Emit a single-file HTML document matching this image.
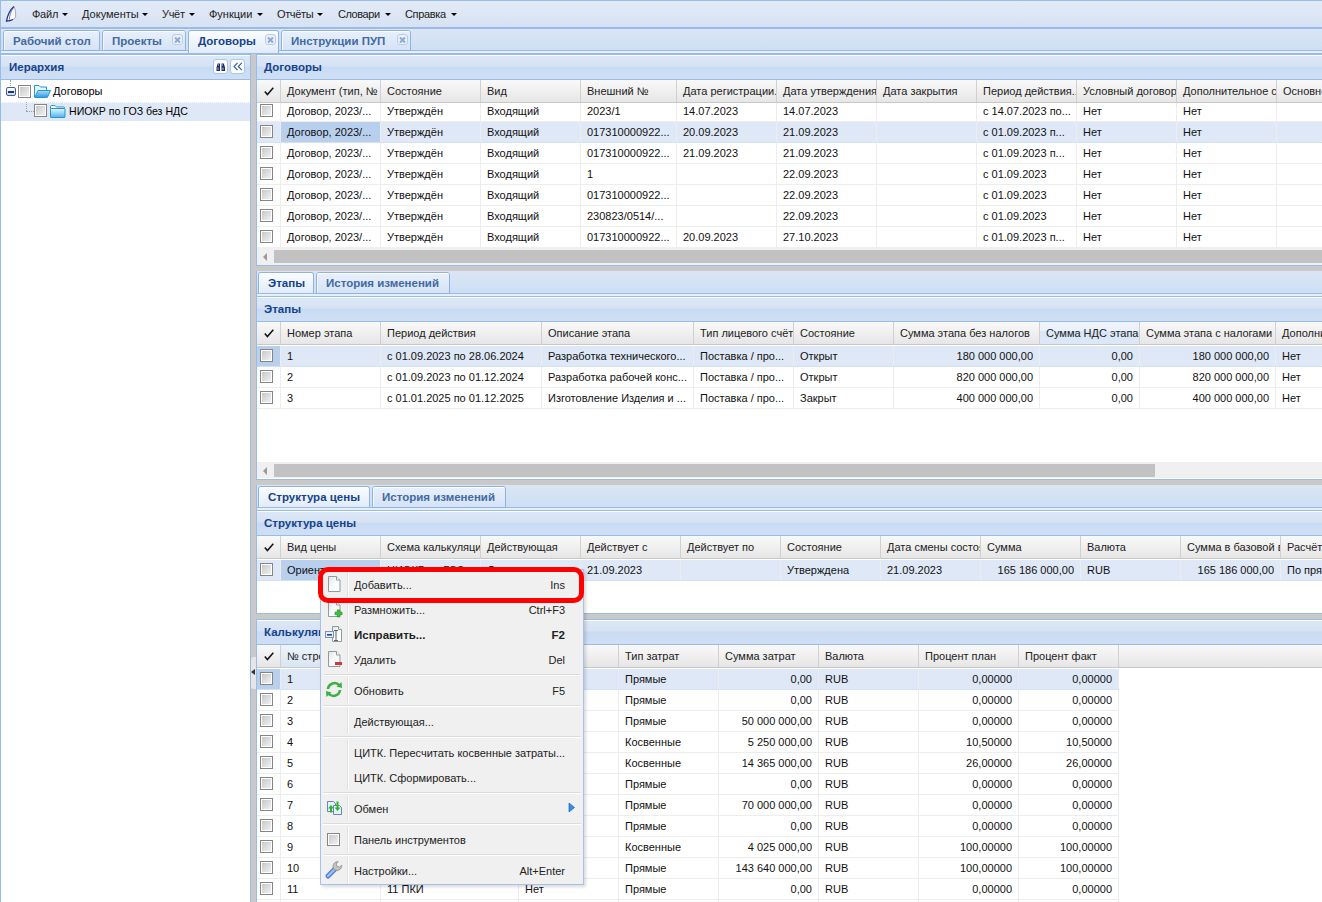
<!DOCTYPE html><html><head><meta charset="utf-8"><style>
*{box-sizing:border-box;margin:0;padding:0}
html,body{width:1322px;height:902px;overflow:hidden;background:#c9c9c9;font-family:"Liberation Sans",sans-serif;font-size:11px;color:#000}
.a{position:absolute}
.menubar{left:0;top:0;width:1322px;height:28px;border:1px solid #99bbe8;border-right:none;background:linear-gradient(#e3ebf7,#d6e2f2)}
.mi{position:absolute;top:8px;font-size:11px;color:#222;white-space:nowrap;line-height:13px}
.arr{position:absolute;top:13px;width:0;height:0;border-left:3px solid transparent;border-right:3px solid transparent;border-top:3px solid #000}
.strip{background:linear-gradient(#dae6f5,#cedef3)}
.tab{position:absolute;border:1px solid #8db2e3;border-bottom:none;border-radius:3px 3px 0 0;background:linear-gradient(#e9f0fa,#d5e3f5);font-weight:bold;font-size:11.5px;color:#416aa3;white-space:nowrap;line-height:14px}
.tab.act{background:linear-gradient(#fbfdff,#e1ebf8);color:#15428b}
.tab .t{position:absolute;top:3px}
.tab .inner{position:absolute;left:0;right:0;top:0;bottom:0;border-top:1px solid #fff;border-left:1px solid #f3f7fc;border-radius:2px 2px 0 0}
.cls{position:absolute;width:11px;height:11px;border:1px solid #b9cdea;border-radius:3px;background:#eaf1fa}
.cls:before,.cls:after{content:"";position:absolute;left:1px;top:3.5px;width:7px;height:2px;background:#8eaad6;transform:rotate(45deg)}
.cls:after{transform:rotate(-45deg)}
.phdr{background:linear-gradient(#fbfdff 0px,#fbfdff 1px,#dce7f6 1px,#d6e3f4 11px,#c9dbf3 12px,#cfdff5 100%);border-bottom:1px solid #99bbe8;font-weight:bold;font-size:11.5px;color:#15428b;white-space:nowrap}
.phdr span{position:absolute;left:7px;line-height:13px}
.ghdr{background:linear-gradient(#f9f9f9,#e6e6e6);border-bottom:1px solid #c8c8c8;white-space:nowrap;overflow:hidden}
.hc{position:absolute;top:0;bottom:0;border-right:1px solid #d0d0d0;overflow:hidden;padding-left:6px;color:#222}
.hc span{position:absolute;left:6px;line-height:13px}
.row{position:absolute;left:0;height:21px;border-bottom:1px solid #ededed;white-space:nowrap;overflow:hidden;background:#fff}
.row.sel{background:#dfe8f6;border-bottom:1px dotted #cbdaf0}
.c{position:absolute;top:0;height:20px;border-right:1px solid #ededed;overflow:hidden;white-space:nowrap;color:#111}
.c span{position:absolute;left:6px;top:4px;line-height:13px}
.c.r span{left:auto;right:6px}
.c.foc{background:#b8cfee}
.cb{position:absolute;width:13px;height:13px;border:1px solid #858585;background:linear-gradient(135deg,#c4c4c4,#f5f5f5);box-shadow:inset 0 0 0 1px #fff}
.sb{background:#f0f0f0}
.thumb{background:#c2c2c2}
.menu{left:320px;top:566px;width:264px;height:319px;border:1px solid #a5c0e6;background:#f0f0f0;box-shadow:1px 1px 3px rgba(0,0,0,.2)}
.mit{position:absolute;left:33px;font-size:11px;color:#222;white-space:nowrap;line-height:13px}
.msc{position:absolute;right:18px;font-size:11px;color:#222;white-space:nowrap;line-height:13px}
.msep{position:absolute;left:6px;right:6px;height:2px;border-top:1px solid #dcdcdc;border-bottom:1px solid #fff}
</style></head><body>
<div class="a menubar"></div>
<svg class="a" style="left:0;top:0" width="28" height="28" viewBox="0 0 28 28"><path d="M14 6.5 C10.5 9.5 7.5 15 6.5 21.2 L13 19.5 L15.6 17.5 C15.8 13 15.5 9 14 6.5 Z" fill="#fcfdff"/><path d="M14 6.5 C15.5 9 15.8 13 15.6 17.5 L13 19.5" fill="none" stroke="#9aa0ad" stroke-width="0.9"/><path d="M14 6.5 C10.5 9.5 7.5 15 6.5 21.2 C9 21 11 20.5 13 19.5" fill="none" stroke="#24348a" stroke-width="1.3"/><path d="M13.2 8.2 C11 11 9.5 15 9.3 19.8" fill="none" stroke="#4d5aa8" stroke-width="0.8"/></svg>
<div class="mi" style="left:32px;letter-spacing:-0.25px">Файл</div><div class="arr" style="left:62px"></div>
<div class="mi" style="left:82px;letter-spacing:0px">Документы</div><div class="arr" style="left:142px"></div>
<div class="mi" style="left:162px;letter-spacing:-0.3px">Учёт</div><div class="arr" style="left:189px"></div>
<div class="mi" style="left:209px;letter-spacing:0px">Функции</div><div class="arr" style="left:257px"></div>
<div class="mi" style="left:277px;letter-spacing:-0.37px">Отчёты</div><div class="arr" style="left:317px"></div>
<div class="mi" style="left:338px;letter-spacing:-0.44px">Словари</div><div class="arr" style="left:385px"></div>
<div class="mi" style="left:405px;letter-spacing:-0.34px">Справка</div><div class="arr" style="left:451px"></div>
<div class="a strip" style="left:0px;top:28px;width:1322px;height:22px;border-left:1px solid #99bbe8;border-top:1px solid #9db8ec;"></div>
<div class="a" style="left:0px;top:50px;width:1322px;height:4px;border-top:1px solid #99bbe8;border-bottom:1px solid #99bbe8;border-left:1px solid #99bbe8;background:#e6effb"></div>
<div class="tab" style="left:3px;top:30px;width:97px;height:21px;border-bottom:1px solid #8db2e3;"><div class="inner"></div><div class="t" style="left:9px;top:3px">Рабочий стол</div></div>
<div class="tab" style="left:102px;top:30px;width:84px;height:21px;border-bottom:1px solid #8db2e3;"><div class="inner"></div><div class="t" style="left:9px;top:3px">Проекты</div><div class="cls" style="left:69px;top:3px"></div></div>
<div class="tab act" style="left:188px;top:30px;width:91px;height:23px;border-bottom:none;"><div class="inner"></div><div class="t" style="left:9px;top:3px">Договоры</div><div class="cls" style="left:76px;top:3px"></div></div>
<div class="tab" style="left:281px;top:30px;width:130px;height:21px;border-bottom:1px solid #8db2e3;"><div class="inner"></div><div class="t" style="left:9px;top:3px">Инструкции ПУП</div><div class="cls" style="left:115px;top:3px"></div></div>
<div class="a" style="left:0;top:54px;width:251px;height:848px;border:1px solid #99bbe8;border-bottom:none;background:#fff"></div>
<div class="a phdr" style="left:1px;top:55px;width:249px;height:25px"><span style="top:6px;left:8px">Иерархия</span></div>
<div class="a" style="left:1px;top:102px;width:249px;height:19px;background:#dfe8f6;border-top:1px dotted #fff"></div>
<div class="a" style="left:10px;top:80px;width:0;height:6px;border-left:1px dotted #a0a0a0"></div>
<div class="a" style="left:26px;top:102px;width:0;height:9px;border-left:1px dotted #a0a0a0"></div>
<div class="a" style="left:26px;top:111px;width:8px;height:0;border-top:1px dotted #a0a0a0"></div>
<div class="a" style="left:6px;top:87px;width:10px;height:9px;border:1px solid #43608c;border-radius:2px;background:linear-gradient(#fff,#c9d6e8)"><div class="a" style="left:1px;top:3px;width:6px;height:2px;background:#1e3660"></div></div>
<div class="cb" style="left:18px;top:85px"></div>
<svg class="a" style="left:34px;top:85px" width="17" height="13" viewBox="0 0 17 13"><defs><linearGradient id="fo" x1="0" y1="0" x2="0" y2="1"><stop offset="0" stop-color="#a8dcf8"/><stop offset="1" stop-color="#2f98e6"/></linearGradient></defs><path d="M0.5 12 v-11.5 h4.5 l1.5 1.5 h6 v3" fill="#e6f5fd" stroke="#1f98d4"/><path d="M0.8 12.5 l3.2 -7 h12.5 l-3.2 7 z" fill="url(#fo)" stroke="#1f98d4"/></svg>
<div class="a" style="left:53px;top:85px;line-height:13px;white-space:nowrap">Договоры</div>
<div class="cb" style="left:34px;top:104px"></div>
<svg class="a" style="left:50px;top:105px" width="16" height="13" viewBox="0 0 16 13"><defs><linearGradient id="fc" x1="0" y1="0" x2="0" y2="1"><stop offset="0" stop-color="#e6f6fd"/><stop offset="1" stop-color="#4fb2ec"/></linearGradient></defs><path d="M0.5 11.5 v-10 q0 -1 1 -1 h3.5 l1.5 1.5 h7 q1 0 1 1 v8.5 q0 1 -1 1 h-12 q-1 0 -1 -1 z" fill="#ffffff" stroke="#2196d3"/><path d="M0.5 11.5 v-7 q0 -1 1 -1 h12.5 q1 0 1 1 v7 q0 1 -1 1 h-12.5 q-1 0 -1 -1 z" fill="url(#fc)" stroke="#2196d3"/></svg>
<div class="a" style="left:69px;top:105px;line-height:13px;white-space:nowrap;font-size:10.6px">НИОКР по ГОЗ без НДС</div>
<div class="a" style="left:213px;top:59px;width:15px;height:15px;border:1px solid #a9c6ec;border-radius:3px;background:#fbfdff"><svg class="a" style="left:2px;top:2px" width="10" height="10" viewBox="0 0 10 10"><path d="M0.5 9 v-3.5 l1.2-4 h2.3 v7.5 z M5.5 9 v-7.5 h2.3 l1.2 4 v3.5 z" fill="#1c2b58"/><path d="M2 5.5 v2.5 M7 5.5 v2.5" stroke="#a9c3f0" stroke-width="1"/><path d="M2.5 2 v2 M6.5 2 v2" stroke="#7f9be0" stroke-width="0.8"/></svg></div>
<div class="a" style="left:230px;top:59px;width:15px;height:15px;border:1px solid #a9c6ec;border-radius:3px;background:#fbfdff"><svg class="a" style="left:2px;top:2px" width="10" height="9" viewBox="0 0 10 9"><path d="M4.5 0.8 l-3.5 3.7 l3.5 3.7 M8.8 0.8 l-3.5 3.7 l3.5 3.7" fill="none" stroke="#2f5a9a" stroke-width="1.1"/></svg></div>
<div class="a" style="left:256px;top:54px;width:1066px;height:212px;border:1px solid #99bbe8;border-right:none;background:#fff"></div>
<div class="a phdr" style="left:257px;top:55px;width:1065px;height:25px"><span style="top:6px;left:7px">Договоры</span></div>
<div class="a row" style="left:257px;top:101px;width:1065px;height:21px">
<div class="c" style="left:0px;width:24px"></div>
<div class="c" style="left:24px;width:100px"><span>Договор, 2023/...</span></div>
<div class="c" style="left:124px;width:100px"><span>Утверждён</span></div>
<div class="c" style="left:224px;width:100px"><span>Входящий</span></div>
<div class="c" style="left:324px;width:96px"><span>2023/1</span></div>
<div class="c" style="left:420px;width:100px"><span>14.07.2023</span></div>
<div class="c" style="left:520px;width:100px"><span>14.07.2023</span></div>
<div class="c" style="left:620px;width:100px"></div>
<div class="c" style="left:720px;width:100px"><span>с 14.07.2023 по...</span></div>
<div class="c" style="left:820px;width:100px"><span>Нет</span></div>
<div class="c" style="left:920px;width:100px"><span>Нет</span></div>
<div class="c" style="left:1020px;width:124px"></div>
</div>
<div class="cb" style="left:260px;top:104px"></div>
<div class="a row sel" style="left:257px;top:122px;width:1065px;height:21px">
<div class="c" style="left:0px;width:24px"></div>
<div class="c foc" style="left:24px;width:100px"><span>Договор, 2023/...</span></div>
<div class="c" style="left:124px;width:100px"><span>Утверждён</span></div>
<div class="c" style="left:224px;width:100px"><span>Входящий</span></div>
<div class="c" style="left:324px;width:96px"><span>017310000922...</span></div>
<div class="c" style="left:420px;width:100px"><span>20.09.2023</span></div>
<div class="c" style="left:520px;width:100px"><span>21.09.2023</span></div>
<div class="c" style="left:620px;width:100px"></div>
<div class="c" style="left:720px;width:100px"><span>с 01.09.2023 п...</span></div>
<div class="c" style="left:820px;width:100px"><span>Нет</span></div>
<div class="c" style="left:920px;width:100px"><span>Нет</span></div>
<div class="c" style="left:1020px;width:124px"></div>
</div>
<div class="cb" style="left:260px;top:125px"></div>
<div class="a row" style="left:257px;top:143px;width:1065px;height:21px">
<div class="c" style="left:0px;width:24px"></div>
<div class="c" style="left:24px;width:100px"><span>Договор, 2023/...</span></div>
<div class="c" style="left:124px;width:100px"><span>Утверждён</span></div>
<div class="c" style="left:224px;width:100px"><span>Входящий</span></div>
<div class="c" style="left:324px;width:96px"><span>017310000922...</span></div>
<div class="c" style="left:420px;width:100px"><span>21.09.2023</span></div>
<div class="c" style="left:520px;width:100px"><span>21.09.2023</span></div>
<div class="c" style="left:620px;width:100px"></div>
<div class="c" style="left:720px;width:100px"><span>с 01.09.2023 п...</span></div>
<div class="c" style="left:820px;width:100px"><span>Нет</span></div>
<div class="c" style="left:920px;width:100px"><span>Нет</span></div>
<div class="c" style="left:1020px;width:124px"></div>
</div>
<div class="cb" style="left:260px;top:146px"></div>
<div class="a row" style="left:257px;top:164px;width:1065px;height:21px">
<div class="c" style="left:0px;width:24px"></div>
<div class="c" style="left:24px;width:100px"><span>Договор, 2023/...</span></div>
<div class="c" style="left:124px;width:100px"><span>Утверждён</span></div>
<div class="c" style="left:224px;width:100px"><span>Входящий</span></div>
<div class="c" style="left:324px;width:96px"><span>1</span></div>
<div class="c" style="left:420px;width:100px"></div>
<div class="c" style="left:520px;width:100px"><span>22.09.2023</span></div>
<div class="c" style="left:620px;width:100px"></div>
<div class="c" style="left:720px;width:100px"><span>с 01.09.2023</span></div>
<div class="c" style="left:820px;width:100px"><span>Нет</span></div>
<div class="c" style="left:920px;width:100px"><span>Нет</span></div>
<div class="c" style="left:1020px;width:124px"></div>
</div>
<div class="cb" style="left:260px;top:167px"></div>
<div class="a row" style="left:257px;top:185px;width:1065px;height:21px">
<div class="c" style="left:0px;width:24px"></div>
<div class="c" style="left:24px;width:100px"><span>Договор, 2023/...</span></div>
<div class="c" style="left:124px;width:100px"><span>Утверждён</span></div>
<div class="c" style="left:224px;width:100px"><span>Входящий</span></div>
<div class="c" style="left:324px;width:96px"><span>017310000922...</span></div>
<div class="c" style="left:420px;width:100px"></div>
<div class="c" style="left:520px;width:100px"><span>22.09.2023</span></div>
<div class="c" style="left:620px;width:100px"></div>
<div class="c" style="left:720px;width:100px"><span>с 01.09.2023</span></div>
<div class="c" style="left:820px;width:100px"><span>Нет</span></div>
<div class="c" style="left:920px;width:100px"><span>Нет</span></div>
<div class="c" style="left:1020px;width:124px"></div>
</div>
<div class="cb" style="left:260px;top:188px"></div>
<div class="a row" style="left:257px;top:206px;width:1065px;height:21px">
<div class="c" style="left:0px;width:24px"></div>
<div class="c" style="left:24px;width:100px"><span>Договор, 2023/...</span></div>
<div class="c" style="left:124px;width:100px"><span>Утверждён</span></div>
<div class="c" style="left:224px;width:100px"><span>Входящий</span></div>
<div class="c" style="left:324px;width:96px"><span>230823/0514/...</span></div>
<div class="c" style="left:420px;width:100px"></div>
<div class="c" style="left:520px;width:100px"><span>22.09.2023</span></div>
<div class="c" style="left:620px;width:100px"></div>
<div class="c" style="left:720px;width:100px"><span>с 01.09.2023</span></div>
<div class="c" style="left:820px;width:100px"><span>Нет</span></div>
<div class="c" style="left:920px;width:100px"><span>Нет</span></div>
<div class="c" style="left:1020px;width:124px"></div>
</div>
<div class="cb" style="left:260px;top:209px"></div>
<div class="a row" style="left:257px;top:227px;width:1065px;height:21px">
<div class="c" style="left:0px;width:24px"></div>
<div class="c" style="left:24px;width:100px"><span>Договор, 2023/...</span></div>
<div class="c" style="left:124px;width:100px"><span>Утверждён</span></div>
<div class="c" style="left:224px;width:100px"><span>Входящий</span></div>
<div class="c" style="left:324px;width:96px"><span>017310000922...</span></div>
<div class="c" style="left:420px;width:100px"><span>20.09.2023</span></div>
<div class="c" style="left:520px;width:100px"><span>27.10.2023</span></div>
<div class="c" style="left:620px;width:100px"></div>
<div class="c" style="left:720px;width:100px"><span>с 01.09.2023 п...</span></div>
<div class="c" style="left:820px;width:100px"><span>Нет</span></div>
<div class="c" style="left:920px;width:100px"><span>Нет</span></div>
<div class="c" style="left:1020px;width:124px"></div>
</div>
<div class="cb" style="left:260px;top:230px"></div>
<div class="a ghdr" style="left:257px;top:80px;width:1065px;height:23px">
<div class="hc" style="left:0px;width:24px;"></div>
<div class="hc" style="left:24px;width:100px;"><span style="top:5px">Документ (тип, №</span></div>
<div class="hc" style="left:124px;width:100px;"><span style="top:5px">Состояние</span></div>
<div class="hc" style="left:224px;width:100px;"><span style="top:5px">Вид</span></div>
<div class="hc" style="left:324px;width:96px;"><span style="top:5px">Внешний №</span></div>
<div class="hc" style="left:420px;width:100px;"><span style="top:5px">Дата регистрации...</span></div>
<div class="hc" style="left:520px;width:100px;"><span style="top:5px">Дата утверждения</span></div>
<div class="hc" style="left:620px;width:100px;"><span style="top:5px">Дата закрытия</span></div>
<div class="hc" style="left:720px;width:100px;"><span style="top:5px">Период действия...</span></div>
<div class="hc" style="left:820px;width:100px;"><span style="top:5px">Условный договор</span></div>
<div class="hc" style="left:920px;width:100px;"><span style="top:5px">Дополнительное с</span></div>
<div class="hc" style="left:1020px;width:124px;"><span style="top:5px">Основной</span></div>
</div>
<svg class="a" style="left:264px;top:87px" width="10" height="9" viewBox="0 0 10 9"><path d="M0.8 4.6 L3.4 7.6 L9.3 0.8" fill="none" stroke="#111" stroke-width="1.5"/></svg>
<div class="a sb" style="left:257px;top:247px;width:1065px;height:18px"></div>
<div class="a" style="left:263px;top:253px;width:0;height:0;border-top:4px solid transparent;border-bottom:4px solid transparent;border-right:4px solid #9a9a9a"></div>
<div class="a thumb" style="left:274px;top:250px;width:1048px;height:13px"></div>
<div class="a strip" style="left:256px;top:271px;width:1066px;height:22px;border-left:1px solid #99bbe8;"></div>
<div class="a" style="left:256px;top:293px;width:1066px;height:4px;border-top:1px solid #99bbe8;border-bottom:1px solid #99bbe8;border-left:1px solid #99bbe8;background:#e6effb"></div>
<div class="tab act" style="left:258px;top:272px;width:56px;height:21px;border-bottom:none;"><div class="inner"></div><div class="t" style="left:9px;top:3px">Этапы</div></div>
<div class="tab" style="left:316px;top:272px;width:134px;height:22px;border-bottom:1px solid #8db2e3;"><div class="inner"></div><div class="t" style="left:9px;top:3px">История изменений</div></div>
<div class="a" style="left:256px;top:297px;width:1066px;height:183px;border:1px solid #99bbe8;border-right:none;border-top:none;background:#fff"></div>
<div class="a phdr" style="left:257px;top:297px;width:1065px;height:25px"><span style="top:6px;left:7px">Этапы</span></div>
<div class="a row sel" style="left:257px;top:346px;width:1065px;height:21px">
<div class="c foc" style="left:0px;width:24px"></div>
<div class="c" style="left:24px;width:100px"><span>1</span></div>
<div class="c" style="left:124px;width:161px"><span>с 01.09.2023 по 28.06.2024</span></div>
<div class="c" style="left:285px;width:152px"><span>Разработка технического...</span></div>
<div class="c" style="left:437px;width:100px"><span>Поставка / про...</span></div>
<div class="c" style="left:537px;width:100px"><span>Открыт</span></div>
<div class="c r" style="left:637px;width:146px"><span>180 000 000,00</span></div>
<div class="c r" style="left:783px;width:100px"><span>0,00</span></div>
<div class="c r" style="left:883px;width:136px"><span>180 000 000,00</span></div>
<div class="c" style="left:1019px;width:125px"><span>Нет</span></div>
</div>
<div class="cb" style="left:260px;top:349px"></div>
<div class="a row" style="left:257px;top:367px;width:1065px;height:21px">
<div class="c" style="left:0px;width:24px"></div>
<div class="c" style="left:24px;width:100px"><span>2</span></div>
<div class="c" style="left:124px;width:161px"><span>с 01.09.2023 по 01.12.2024</span></div>
<div class="c" style="left:285px;width:152px"><span>Разработка рабочей конс...</span></div>
<div class="c" style="left:437px;width:100px"><span>Поставка / про...</span></div>
<div class="c" style="left:537px;width:100px"><span>Открыт</span></div>
<div class="c r" style="left:637px;width:146px"><span>820 000 000,00</span></div>
<div class="c r" style="left:783px;width:100px"><span>0,00</span></div>
<div class="c r" style="left:883px;width:136px"><span>820 000 000,00</span></div>
<div class="c" style="left:1019px;width:125px"><span>Нет</span></div>
</div>
<div class="cb" style="left:260px;top:370px"></div>
<div class="a row" style="left:257px;top:388px;width:1065px;height:21px">
<div class="c" style="left:0px;width:24px"></div>
<div class="c" style="left:24px;width:100px"><span>3</span></div>
<div class="c" style="left:124px;width:161px"><span>с 01.01.2025 по 01.12.2025</span></div>
<div class="c" style="left:285px;width:152px"><span>Изготовление Изделия и ...</span></div>
<div class="c" style="left:437px;width:100px"><span>Поставка / про...</span></div>
<div class="c" style="left:537px;width:100px"><span>Закрыт</span></div>
<div class="c r" style="left:637px;width:146px"><span>400 000 000,00</span></div>
<div class="c r" style="left:783px;width:100px"><span>0,00</span></div>
<div class="c r" style="left:883px;width:136px"><span>400 000 000,00</span></div>
<div class="c" style="left:1019px;width:125px"><span>Нет</span></div>
</div>
<div class="cb" style="left:260px;top:391px"></div>
<div class="a ghdr" style="left:257px;top:322px;width:1065px;height:23px">
<div class="hc" style="left:0px;width:24px;"></div>
<div class="hc" style="left:24px;width:100px;"><span style="top:5px">Номер этапа</span></div>
<div class="hc" style="left:124px;width:161px;"><span style="top:5px">Период действия</span></div>
<div class="hc" style="left:285px;width:152px;"><span style="top:5px">Описание этапа</span></div>
<div class="hc" style="left:437px;width:100px;"><span style="top:5px">Тип лицевого счёта</span></div>
<div class="hc" style="left:537px;width:100px;"><span style="top:5px">Состояние</span></div>
<div class="hc" style="left:637px;width:146px;"><span style="top:5px">Сумма этапа без налогов</span></div>
<div class="hc" style="left:783px;width:100px;background:linear-gradient(#eef4fc 0,#e9f1fb 9px,#d9e6f8 9px,#dce8f8 100%)"><span style="top:5px">Сумма НДС этапа</span></div>
<div class="hc" style="left:883px;width:136px;"><span style="top:5px">Сумма этапа с налогами</span></div>
<div class="hc" style="left:1019px;width:125px;"><span style="top:5px">Дополнительно</span></div>
</div>
<svg class="a" style="left:264px;top:329px" width="10" height="9" viewBox="0 0 10 9"><path d="M0.8 4.6 L3.4 7.6 L9.3 0.8" fill="none" stroke="#111" stroke-width="1.5"/></svg>
<div class="a sb" style="left:257px;top:462px;width:1065px;height:16px"></div>
<div class="a" style="left:263px;top:467px;width:0;height:0;border-top:4px solid transparent;border-bottom:4px solid transparent;border-right:4px solid #9a9a9a"></div>
<div class="a thumb" style="left:274px;top:464px;width:881px;height:13px"></div>
<div class="a strip" style="left:256px;top:485px;width:1066px;height:22px;border-left:1px solid #99bbe8;"></div>
<div class="a" style="left:256px;top:507px;width:1066px;height:4px;border-top:1px solid #99bbe8;border-bottom:1px solid #99bbe8;border-left:1px solid #99bbe8;background:#e6effb"></div>
<div class="tab act" style="left:258px;top:486px;width:112px;height:21px;border-bottom:none;"><div class="inner"></div><div class="t" style="left:9px;top:3px">Структура цены</div></div>
<div class="tab" style="left:372px;top:486px;width:134px;height:22px;border-bottom:1px solid #8db2e3;"><div class="inner"></div><div class="t" style="left:9px;top:3px">История изменений</div></div>
<div class="a" style="left:256px;top:511px;width:1066px;height:103px;border:1px solid #99bbe8;border-right:none;border-top:none;background:#fff"></div>
<div class="a phdr" style="left:257px;top:511px;width:1065px;height:25px"><span style="top:6px;left:7px">Структура цены</span></div>
<div class="a row sel" style="left:257px;top:560px;width:1065px;height:21px">
<div class="c" style="left:0px;width:24px"></div>
<div class="c foc" style="left:24px;width:100px"><span>Ориентировочная</span></div>
<div class="c" style="left:124px;width:100px"><span>НИОКР по ГОЗ...</span></div>
<div class="c" style="left:224px;width:100px"><span>Да</span></div>
<div class="c" style="left:324px;width:100px"><span>21.09.2023</span></div>
<div class="c" style="left:424px;width:100px"></div>
<div class="c" style="left:524px;width:100px"><span>Утверждена</span></div>
<div class="c" style="left:624px;width:100px"><span>21.09.2023</span></div>
<div class="c r" style="left:724px;width:100px"><span>165 186 000,00</span></div>
<div class="c" style="left:824px;width:100px"><span>RUB</span></div>
<div class="c r" style="left:924px;width:100px"><span>165 186 000,00</span></div>
<div class="c" style="left:1024px;width:120px"><span>По прямым</span></div>
</div>
<div class="cb" style="left:260px;top:563px"></div>
<div class="a ghdr" style="left:257px;top:536px;width:1065px;height:23px">
<div class="hc" style="left:0px;width:24px;"></div>
<div class="hc" style="left:24px;width:100px;"><span style="top:5px">Вид цены</span></div>
<div class="hc" style="left:124px;width:100px;"><span style="top:5px">Схема калькуляции</span></div>
<div class="hc" style="left:224px;width:100px;"><span style="top:5px">Действующая</span></div>
<div class="hc" style="left:324px;width:100px;"><span style="top:5px">Действует с</span></div>
<div class="hc" style="left:424px;width:100px;"><span style="top:5px">Действует по</span></div>
<div class="hc" style="left:524px;width:100px;"><span style="top:5px">Состояние</span></div>
<div class="hc" style="left:624px;width:100px;"><span style="top:5px">Дата смены состояния</span></div>
<div class="hc" style="left:724px;width:100px;"><span style="top:5px">Сумма</span></div>
<div class="hc" style="left:824px;width:100px;"><span style="top:5px">Валюта</span></div>
<div class="hc" style="left:924px;width:100px;"><span style="top:5px">Сумма в базовой валюте</span></div>
<div class="hc" style="left:1024px;width:120px;"><span style="top:5px">Расчёт</span></div>
</div>
<svg class="a" style="left:264px;top:543px" width="10" height="9" viewBox="0 0 10 9"><path d="M0.8 4.6 L3.4 7.6 L9.3 0.8" fill="none" stroke="#111" stroke-width="1.5"/></svg>
<div class="a" style="left:256px;top:619px;width:1066px;height:283px;border:1px solid #99bbe8;border-right:none;border-bottom:none;background:#fff"></div>
<div class="a phdr" style="left:257px;top:620px;width:1065px;height:25px"><span style="top:6px;left:7px">Калькуляция</span></div>
<div class="a row sel" style="left:257px;top:669px;width:862px;height:21px">
<div class="c foc" style="left:0px;width:24px"></div>
<div class="c" style="left:24px;width:100px"><span>1</span></div>
<div class="c" style="left:124px;width:138px"></div>
<div class="c" style="left:262px;width:100px"></div>
<div class="c" style="left:362px;width:100px"><span>Прямые</span></div>
<div class="c r" style="left:462px;width:100px"><span>0,00</span></div>
<div class="c" style="left:562px;width:100px"><span>RUB</span></div>
<div class="c r" style="left:662px;width:100px"><span>0,00000</span></div>
<div class="c r" style="left:762px;width:100px"><span>0,00000</span></div>
</div>
<div class="cb" style="left:260px;top:672px"></div>
<div class="a row" style="left:257px;top:690px;width:862px;height:21px">
<div class="c" style="left:0px;width:24px"></div>
<div class="c" style="left:24px;width:100px"><span>2</span></div>
<div class="c" style="left:124px;width:138px"></div>
<div class="c" style="left:262px;width:100px"></div>
<div class="c" style="left:362px;width:100px"><span>Прямые</span></div>
<div class="c r" style="left:462px;width:100px"><span>0,00</span></div>
<div class="c" style="left:562px;width:100px"><span>RUB</span></div>
<div class="c r" style="left:662px;width:100px"><span>0,00000</span></div>
<div class="c r" style="left:762px;width:100px"><span>0,00000</span></div>
</div>
<div class="cb" style="left:260px;top:693px"></div>
<div class="a row" style="left:257px;top:711px;width:862px;height:21px">
<div class="c" style="left:0px;width:24px"></div>
<div class="c" style="left:24px;width:100px"><span>3</span></div>
<div class="c" style="left:124px;width:138px"></div>
<div class="c" style="left:262px;width:100px"></div>
<div class="c" style="left:362px;width:100px"><span>Прямые</span></div>
<div class="c r" style="left:462px;width:100px"><span>50 000 000,00</span></div>
<div class="c" style="left:562px;width:100px"><span>RUB</span></div>
<div class="c r" style="left:662px;width:100px"><span>0,00000</span></div>
<div class="c r" style="left:762px;width:100px"><span>0,00000</span></div>
</div>
<div class="cb" style="left:260px;top:714px"></div>
<div class="a row" style="left:257px;top:732px;width:862px;height:21px">
<div class="c" style="left:0px;width:24px"></div>
<div class="c" style="left:24px;width:100px"><span>4</span></div>
<div class="c" style="left:124px;width:138px"></div>
<div class="c" style="left:262px;width:100px"></div>
<div class="c" style="left:362px;width:100px"><span>Косвенные</span></div>
<div class="c r" style="left:462px;width:100px"><span>5 250 000,00</span></div>
<div class="c" style="left:562px;width:100px"><span>RUB</span></div>
<div class="c r" style="left:662px;width:100px"><span>10,50000</span></div>
<div class="c r" style="left:762px;width:100px"><span>10,50000</span></div>
</div>
<div class="cb" style="left:260px;top:735px"></div>
<div class="a row" style="left:257px;top:753px;width:862px;height:21px">
<div class="c" style="left:0px;width:24px"></div>
<div class="c" style="left:24px;width:100px"><span>5</span></div>
<div class="c" style="left:124px;width:138px"></div>
<div class="c" style="left:262px;width:100px"></div>
<div class="c" style="left:362px;width:100px"><span>Косвенные</span></div>
<div class="c r" style="left:462px;width:100px"><span>14 365 000,00</span></div>
<div class="c" style="left:562px;width:100px"><span>RUB</span></div>
<div class="c r" style="left:662px;width:100px"><span>26,00000</span></div>
<div class="c r" style="left:762px;width:100px"><span>26,00000</span></div>
</div>
<div class="cb" style="left:260px;top:756px"></div>
<div class="a row" style="left:257px;top:774px;width:862px;height:21px">
<div class="c" style="left:0px;width:24px"></div>
<div class="c" style="left:24px;width:100px"><span>6</span></div>
<div class="c" style="left:124px;width:138px"></div>
<div class="c" style="left:262px;width:100px"></div>
<div class="c" style="left:362px;width:100px"><span>Прямые</span></div>
<div class="c r" style="left:462px;width:100px"><span>0,00</span></div>
<div class="c" style="left:562px;width:100px"><span>RUB</span></div>
<div class="c r" style="left:662px;width:100px"><span>0,00000</span></div>
<div class="c r" style="left:762px;width:100px"><span>0,00000</span></div>
</div>
<div class="cb" style="left:260px;top:777px"></div>
<div class="a row" style="left:257px;top:795px;width:862px;height:21px">
<div class="c" style="left:0px;width:24px"></div>
<div class="c" style="left:24px;width:100px"><span>7</span></div>
<div class="c" style="left:124px;width:138px"></div>
<div class="c" style="left:262px;width:100px"></div>
<div class="c" style="left:362px;width:100px"><span>Прямые</span></div>
<div class="c r" style="left:462px;width:100px"><span>70 000 000,00</span></div>
<div class="c" style="left:562px;width:100px"><span>RUB</span></div>
<div class="c r" style="left:662px;width:100px"><span>0,00000</span></div>
<div class="c r" style="left:762px;width:100px"><span>0,00000</span></div>
</div>
<div class="cb" style="left:260px;top:798px"></div>
<div class="a row" style="left:257px;top:816px;width:862px;height:21px">
<div class="c" style="left:0px;width:24px"></div>
<div class="c" style="left:24px;width:100px"><span>8</span></div>
<div class="c" style="left:124px;width:138px"></div>
<div class="c" style="left:262px;width:100px"></div>
<div class="c" style="left:362px;width:100px"><span>Прямые</span></div>
<div class="c r" style="left:462px;width:100px"><span>0,00</span></div>
<div class="c" style="left:562px;width:100px"><span>RUB</span></div>
<div class="c r" style="left:662px;width:100px"><span>0,00000</span></div>
<div class="c r" style="left:762px;width:100px"><span>0,00000</span></div>
</div>
<div class="cb" style="left:260px;top:819px"></div>
<div class="a row" style="left:257px;top:837px;width:862px;height:21px">
<div class="c" style="left:0px;width:24px"></div>
<div class="c" style="left:24px;width:100px"><span>9</span></div>
<div class="c" style="left:124px;width:138px"></div>
<div class="c" style="left:262px;width:100px"></div>
<div class="c" style="left:362px;width:100px"><span>Косвенные</span></div>
<div class="c r" style="left:462px;width:100px"><span>4 025 000,00</span></div>
<div class="c" style="left:562px;width:100px"><span>RUB</span></div>
<div class="c r" style="left:662px;width:100px"><span>100,00000</span></div>
<div class="c r" style="left:762px;width:100px"><span>100,00000</span></div>
</div>
<div class="cb" style="left:260px;top:840px"></div>
<div class="a row" style="left:257px;top:858px;width:862px;height:21px">
<div class="c" style="left:0px;width:24px"></div>
<div class="c" style="left:24px;width:100px"><span>10</span></div>
<div class="c" style="left:124px;width:138px"></div>
<div class="c" style="left:262px;width:100px"></div>
<div class="c" style="left:362px;width:100px"><span>Прямые</span></div>
<div class="c r" style="left:462px;width:100px"><span>143 640 000,00</span></div>
<div class="c" style="left:562px;width:100px"><span>RUB</span></div>
<div class="c r" style="left:662px;width:100px"><span>100,00000</span></div>
<div class="c r" style="left:762px;width:100px"><span>100,00000</span></div>
</div>
<div class="cb" style="left:260px;top:861px"></div>
<div class="a row" style="left:257px;top:879px;width:862px;height:21px">
<div class="c" style="left:0px;width:24px"></div>
<div class="c" style="left:24px;width:100px"><span>11</span></div>
<div class="c" style="left:124px;width:138px"><span>11 ПКИ</span></div>
<div class="c" style="left:262px;width:100px"><span>Нет</span></div>
<div class="c" style="left:362px;width:100px"><span>Прямые</span></div>
<div class="c r" style="left:462px;width:100px"><span>0,00</span></div>
<div class="c" style="left:562px;width:100px"><span>RUB</span></div>
<div class="c r" style="left:662px;width:100px"><span>0,00000</span></div>
<div class="c r" style="left:762px;width:100px"><span>0,00000</span></div>
</div>
<div class="cb" style="left:260px;top:882px"></div>
<div class="a row" style="left:257px;top:900px;width:862px;height:21px">
<div class="c" style="left:0px;width:24px"></div>
<div class="c" style="left:24px;width:100px"></div>
<div class="c" style="left:124px;width:138px"></div>
<div class="c" style="left:262px;width:100px"></div>
<div class="c" style="left:362px;width:100px"></div>
<div class="c" style="left:462px;width:100px"></div>
<div class="c" style="left:562px;width:100px"></div>
<div class="c" style="left:662px;width:100px"></div>
<div class="c" style="left:762px;width:100px"></div>
</div>
<div class="cb" style="left:260px;top:903px"></div>
<div class="a ghdr" style="left:257px;top:645px;width:1065px;height:23px">
<div class="hc" style="left:0px;width:24px;"></div>
<div class="hc" style="left:24px;width:100px;background:linear-gradient(#eef4fb,#d9e5f4)"><span style="top:5px">№ строки</span></div>
<div class="hc" style="left:124px;width:138px;"><span style="top:5px">Наименование</span></div>
<div class="hc" style="left:262px;width:100px;"><span style="top:5px">Признак</span></div>
<div class="hc" style="left:362px;width:100px;"><span style="top:5px">Тип затрат</span></div>
<div class="hc" style="left:462px;width:100px;"><span style="top:5px">Сумма затрат</span></div>
<div class="hc" style="left:562px;width:100px;"><span style="top:5px">Валюта</span></div>
<div class="hc" style="left:662px;width:100px;"><span style="top:5px">Процент план</span></div>
<div class="hc" style="left:762px;width:100px;"><span style="top:5px">Процент факт</span></div>
</div>
<svg class="a" style="left:264px;top:652px" width="10" height="9" viewBox="0 0 10 9"><path d="M0.8 4.6 L3.4 7.6 L9.3 0.8" fill="none" stroke="#111" stroke-width="1.5"/></svg>
<div class="a" style="left:251px;top:657px;width:5px;height:32px;background:#e6e6e6;border-radius:3px 0 0 3px"></div>
<div class="a" style="left:251px;top:669px;width:0;height:0;border-top:3px solid transparent;border-bottom:3px solid transparent;border-right:4px solid #333"></div>
<div class="a" style="left:320px;top:569px;width:264px;height:316px;border:1px solid #a7c2e8;background:#f0f0f0;box-shadow:2px 2px 3px rgba(0,0,0,.15)"></div>
<div class="a" style="left:347px;top:571px;width:2px;height:101px;border-left:1px solid #e0e0e0;border-right:1px solid #fff"></div>
<div class="a" style="left:347px;top:677px;width:2px;height:26px;border-left:1px solid #e0e0e0;border-right:1px solid #fff"></div>
<div class="a" style="left:347px;top:708px;width:2px;height:26px;border-left:1px solid #e0e0e0;border-right:1px solid #fff"></div>
<div class="a" style="left:347px;top:739px;width:2px;height:51px;border-left:1px solid #e0e0e0;border-right:1px solid #fff"></div>
<div class="a" style="left:347px;top:795px;width:2px;height:26px;border-left:1px solid #e0e0e0;border-right:1px solid #fff"></div>
<div class="a" style="left:347px;top:826px;width:2px;height:26px;border-left:1px solid #e0e0e0;border-right:1px solid #fff"></div>
<div class="a" style="left:347px;top:857px;width:2px;height:26px;border-left:1px solid #e0e0e0;border-right:1px solid #fff"></div>
<div class="a" style="left:323px;top:674px;width:258px;height:2px;border-top:1px solid #dcdcdc;border-bottom:1px solid #fff"></div>
<div class="a" style="left:323px;top:705px;width:258px;height:2px;border-top:1px solid #dcdcdc;border-bottom:1px solid #fff"></div>
<div class="a" style="left:323px;top:736px;width:258px;height:2px;border-top:1px solid #dcdcdc;border-bottom:1px solid #fff"></div>
<div class="a" style="left:323px;top:792px;width:258px;height:2px;border-top:1px solid #dcdcdc;border-bottom:1px solid #fff"></div>
<div class="a" style="left:323px;top:823px;width:258px;height:2px;border-top:1px solid #dcdcdc;border-bottom:1px solid #fff"></div>
<div class="a" style="left:323px;top:854px;width:258px;height:2px;border-top:1px solid #dcdcdc;border-bottom:1px solid #fff"></div>
<div class="a" style="left:354px;top:579px;line-height:13px;white-space:nowrap;color:#222;">Добавить...</div>
<div class="a" style="right:757px;top:579px;line-height:13px;white-space:nowrap;color:#222;">Ins</div>
<div class="a" style="left:354px;top:604px;line-height:13px;white-space:nowrap;color:#222;">Размножить...</div>
<div class="a" style="right:757px;top:604px;line-height:13px;white-space:nowrap;color:#222;">Ctrl+F3</div>
<div class="a" style="left:354px;top:629px;line-height:13px;white-space:nowrap;color:#222;font-weight:bold;font-size:11.5px;">Исправить...</div>
<div class="a" style="right:757px;top:629px;line-height:13px;white-space:nowrap;color:#222;font-weight:bold;font-size:11.5px;">F2</div>
<div class="a" style="left:354px;top:654px;line-height:13px;white-space:nowrap;color:#222;">Удалить</div>
<div class="a" style="right:757px;top:654px;line-height:13px;white-space:nowrap;color:#222;">Del</div>
<div class="a" style="left:354px;top:685px;line-height:13px;white-space:nowrap;color:#222;">Обновить</div>
<div class="a" style="right:757px;top:685px;line-height:13px;white-space:nowrap;color:#222;">F5</div>
<div class="a" style="left:354px;top:716px;line-height:13px;white-space:nowrap;color:#222;">Действующая...</div>
<div class="a" style="left:354px;top:747px;line-height:13px;white-space:nowrap;color:#222;">ЦИТК. Пересчитать косвенные затраты...</div>
<div class="a" style="left:354px;top:772px;line-height:13px;white-space:nowrap;color:#222;">ЦИТК. Сформировать...</div>
<div class="a" style="left:354px;top:803px;line-height:13px;white-space:nowrap;color:#222;">Обмен</div>
<div class="a" style="left:354px;top:834px;line-height:13px;white-space:nowrap;color:#222;">Панель инструментов</div>
<div class="a" style="left:354px;top:865px;line-height:13px;white-space:nowrap;color:#222;">Настройки...</div>
<div class="a" style="right:757px;top:865px;line-height:13px;white-space:nowrap;color:#222;">Alt+Enter</div>
<svg class="a" style="left:0;top:0" width="1322" height="902"><defs><linearGradient id="dg" x1="0" y1="0" x2="1" y2="1"><stop offset="0" stop-color="#dfe3e6"/><stop offset="0.5" stop-color="#fbfbfb"/><stop offset="1" stop-color="#ffffff"/></linearGradient></defs><path d="M328.5 576.5 h8 l3.5 3.5 v11.5 h-11.5 z" fill="url(#dg)" stroke="#8f9ba0"/><path d="M336.5 576.5 v3.5 h3.5" fill="#fff" stroke="#8f9ba0"/><path d="M328.5 601.5 h8 l3.5 3.5 v11.5 h-11.5 z" fill="url(#dg)" stroke="#8f9ba0"/><path d="M336.5 601.5 v3.5 h3.5" fill="#fff" stroke="#8f9ba0"/><path d="M335 612.2 h2.3 v-2.3 h2.4 v2.3 h2.3 v2.4 h-2.3 v2.3 h-2.4 v-2.3 h-2.3 z" fill="#35c93a" stroke="#1c8a22" stroke-width="0.7"/><path d="M332.5 626.5 h6 l3 3 v12 h-9 z" fill="url(#dg)" stroke="#8f9ba0"/><path d="M338.5 626.5 v3 h3" fill="#fff" stroke="#8f9ba0"/><rect x="325.5" y="631.5" width="8" height="6" fill="#e8f0fb" stroke="#7a92b8"/><rect x="327" y="634" width="5" height="1.6" fill="#2346a8"/><path d="M334 630.5 h4 M336 630.5 v10 M334 640.5 h4" stroke="#555" stroke-width="0.9" fill="none"/><path d="M328.5 651.5 h8 l3.5 3.5 v11.5 h-11.5 z" fill="url(#dg)" stroke="#8f9ba0"/><path d="M336.5 651.5 v3.5 h3.5" fill="#fff" stroke="#8f9ba0"/><rect x="335" y="662" width="7" height="3" fill="#d23a3a"/><path d="M328 689 a6.5 6.5 0 0 1 11.5 -3.5" fill="none" stroke="#3cb043" stroke-width="2.6"/><path d="M341.5 682 l0.5 6 l-5.5 -1.5 z" fill="#3cb043"/><path d="M340 690 a6.5 6.5 0 0 1 -11.5 3.5" fill="none" stroke="#3cb043" stroke-width="2.6"/><path d="M326.5 697 l-0.5 -6 l5.5 1.5 z" fill="#3cb043"/><path d="M327.5 801.5 h6 l2 2 v8 h-8 z" fill="#e8f0fb" stroke="#5a78b0" stroke-width="0.9"/><path d="M333.5 805.5 h6 l2 2 v7 h-8 z" fill="#e8f0fb" stroke="#5a78b0" stroke-width="0.9"/><path d="M331 805 l-3 3.5 h2 v4 h2 v-4 h2 z" fill="#28b828"/><path d="M337.5 811 l3 -3.5 h-2 v-6 h-2 v6 h-2 z" fill="#28b828"/><path d="M328 876 l7.5 -7.5" stroke="#4f7fcf" stroke-width="5" stroke-linecap="round"/><path d="M328 876 l7.5 -7.5" stroke="#9cc0f2" stroke-width="2.4" stroke-linecap="round"/><path d="M333.5 868.5 a4.8 4.8 0 0 1 2.5 -6.5 l2.2 -0.4 l-2 2.4 l0.8 2.4 l2.4 0.8 l2.4 -2 l-0.3 2.2 a4.8 4.8 0 0 1 -6.5 2.6 z" fill="#c4c4c4" stroke="#8c8c8c" stroke-width="0.8"/><path d="M569 803 L574.5 807.5 L569 812 Z" fill="#3d8ae0" stroke="#1f6fd0" stroke-width="0.8" stroke-linejoin="round"/></svg>
<div class="cb" style="left:327px;top:833px"></div>
<div class="a" style="left:318px;top:567px;width:266px;height:36px;border:5px solid #ff0000;border-radius:10px"></div>
</body></html>
